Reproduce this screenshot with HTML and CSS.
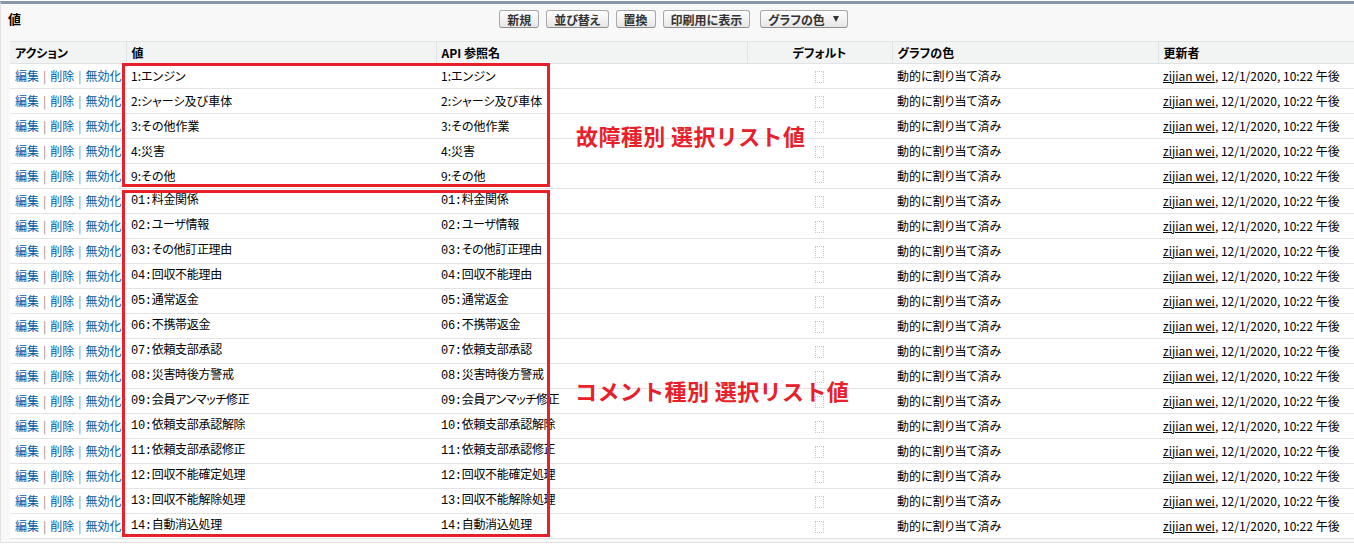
FILE: index.html
```html
<!DOCTYPE html>
<html lang="ja">
<head>
<meta charset="utf-8">
<title>値</title>
<link rel="stylesheet" href="styles.css">
</head>
<body>
<div class="panel">
  <div class="panel-head">
    <h2 class="title">値</h2>
    <div class="buttons">
      <button class="btn">新規</button>
      <button class="btn">並び替え</button>
      <button class="btn">置換</button>
      <button class="btn">印刷用に表示</button>
      <button class="btn btn-menu">グラフの色 <span class="caret"></span></button>
    </div>
    <div></div>
  </div>
  <div class="table-wrap">
    <table class="list">
      <colgroup>
        <col class="c-act"><col class="c-val"><col class="c-api"><col class="c-def"><col class="c-color"><col>
      </colgroup>
      <thead>
        <tr><th>アクション</th><th>値</th><th>API 参照名</th><th class="center">デフォルト</th><th>グラフの色</th><th>更新者</th></tr>
      </thead>
      <tbody>
        <tr><td class="act"><a>編集</a><span class="sep">|</span><a>削除</a><span class="sep">|</span><a>無効化</a></td><td>1:エンジン</td><td>1:エンジン</td><td class="center"><span class="cb"></span></td><td>動的に割り当て済み</td><td><u>zijian wei</u>, 12/1/2020, 10:22 午後</td></tr>
        <tr><td class="act"><a>編集</a><span class="sep">|</span><a>削除</a><span class="sep">|</span><a>無効化</a></td><td>2:シャーシ及び車体</td><td>2:シャーシ及び車体</td><td class="center"><span class="cb"></span></td><td>動的に割り当て済み</td><td><u>zijian wei</u>, 12/1/2020, 10:22 午後</td></tr>
        <tr><td class="act"><a>編集</a><span class="sep">|</span><a>削除</a><span class="sep">|</span><a>無効化</a></td><td>3:その他作業</td><td>3:その他作業</td><td class="center"><span class="cb"></span></td><td>動的に割り当て済み</td><td><u>zijian wei</u>, 12/1/2020, 10:22 午後</td></tr>
        <tr><td class="act"><a>編集</a><span class="sep">|</span><a>削除</a><span class="sep">|</span><a>無効化</a></td><td>4:災害</td><td>4:災害</td><td class="center"><span class="cb"></span></td><td>動的に割り当て済み</td><td><u>zijian wei</u>, 12/1/2020, 10:22 午後</td></tr>
        <tr><td class="act"><a>編集</a><span class="sep">|</span><a>削除</a><span class="sep">|</span><a>無効化</a></td><td>9:その他</td><td>9:その他</td><td class="center"><span class="cb"></span></td><td>動的に割り当て済み</td><td><u>zijian wei</u>, 12/1/2020, 10:22 午後</td></tr>
        <tr><td class="act"><a>編集</a><span class="sep">|</span><a>削除</a><span class="sep">|</span><a>無効化</a></td><td class="mono">01:料金関係</td><td class="mono">01:料金関係</td><td class="center"><span class="cb"></span></td><td>動的に割り当て済み</td><td><u>zijian wei</u>, 12/1/2020, 10:22 午後</td></tr>
        <tr><td class="act"><a>編集</a><span class="sep">|</span><a>削除</a><span class="sep">|</span><a>無効化</a></td><td class="mono">02:ユーザ情報</td><td class="mono">02:ユーザ情報</td><td class="center"><span class="cb"></span></td><td>動的に割り当て済み</td><td><u>zijian wei</u>, 12/1/2020, 10:22 午後</td></tr>
        <tr><td class="act"><a>編集</a><span class="sep">|</span><a>削除</a><span class="sep">|</span><a>無効化</a></td><td class="mono">03:その他訂正理由</td><td class="mono">03:その他訂正理由</td><td class="center"><span class="cb"></span></td><td>動的に割り当て済み</td><td><u>zijian wei</u>, 12/1/2020, 10:22 午後</td></tr>
        <tr><td class="act"><a>編集</a><span class="sep">|</span><a>削除</a><span class="sep">|</span><a>無効化</a></td><td class="mono">04:回収不能理由</td><td class="mono">04:回収不能理由</td><td class="center"><span class="cb"></span></td><td>動的に割り当て済み</td><td><u>zijian wei</u>, 12/1/2020, 10:22 午後</td></tr>
        <tr><td class="act"><a>編集</a><span class="sep">|</span><a>削除</a><span class="sep">|</span><a>無効化</a></td><td class="mono">05:通常返金</td><td class="mono">05:通常返金</td><td class="center"><span class="cb"></span></td><td>動的に割り当て済み</td><td><u>zijian wei</u>, 12/1/2020, 10:22 午後</td></tr>
        <tr><td class="act"><a>編集</a><span class="sep">|</span><a>削除</a><span class="sep">|</span><a>無効化</a></td><td class="mono">06:不携帯返金</td><td class="mono">06:不携帯返金</td><td class="center"><span class="cb"></span></td><td>動的に割り当て済み</td><td><u>zijian wei</u>, 12/1/2020, 10:22 午後</td></tr>
        <tr><td class="act"><a>編集</a><span class="sep">|</span><a>削除</a><span class="sep">|</span><a>無効化</a></td><td class="mono">07:依頼支部承認</td><td class="mono">07:依頼支部承認</td><td class="center"><span class="cb"></span></td><td>動的に割り当て済み</td><td><u>zijian wei</u>, 12/1/2020, 10:22 午後</td></tr>
        <tr><td class="act"><a>編集</a><span class="sep">|</span><a>削除</a><span class="sep">|</span><a>無効化</a></td><td class="mono">08:災害時後方警戒</td><td class="mono">08:災害時後方警戒</td><td class="center"><span class="cb"></span></td><td>動的に割り当て済み</td><td><u>zijian wei</u>, 12/1/2020, 10:22 午後</td></tr>
        <tr><td class="act"><a>編集</a><span class="sep">|</span><a>削除</a><span class="sep">|</span><a>無効化</a></td><td class="mono">09:会員アンマッチ修正</td><td class="mono">09:会員アンマッチ修正</td><td class="center"><span class="cb"></span></td><td>動的に割り当て済み</td><td><u>zijian wei</u>, 12/1/2020, 10:22 午後</td></tr>
        <tr><td class="act"><a>編集</a><span class="sep">|</span><a>削除</a><span class="sep">|</span><a>無効化</a></td><td class="mono">10:依頼支部承認解除</td><td class="mono">10:依頼支部承認解除</td><td class="center"><span class="cb"></span></td><td>動的に割り当て済み</td><td><u>zijian wei</u>, 12/1/2020, 10:22 午後</td></tr>
        <tr><td class="act"><a>編集</a><span class="sep">|</span><a>削除</a><span class="sep">|</span><a>無効化</a></td><td class="mono">11:依頼支部承認修正</td><td class="mono">11:依頼支部承認修正</td><td class="center"><span class="cb"></span></td><td>動的に割り当て済み</td><td><u>zijian wei</u>, 12/1/2020, 10:22 午後</td></tr>
        <tr><td class="act"><a>編集</a><span class="sep">|</span><a>削除</a><span class="sep">|</span><a>無効化</a></td><td class="mono">12:回収不能確定処理</td><td class="mono">12:回収不能確定処理</td><td class="center"><span class="cb"></span></td><td>動的に割り当て済み</td><td><u>zijian wei</u>, 12/1/2020, 10:22 午後</td></tr>
        <tr><td class="act"><a>編集</a><span class="sep">|</span><a>削除</a><span class="sep">|</span><a>無効化</a></td><td class="mono">13:回収不能解除処理</td><td class="mono">13:回収不能解除処理</td><td class="center"><span class="cb"></span></td><td>動的に割り当て済み</td><td><u>zijian wei</u>, 12/1/2020, 10:22 午後</td></tr>
        <tr><td class="act"><a>編集</a><span class="sep">|</span><a>削除</a><span class="sep">|</span><a>無効化</a></td><td class="mono">14:自動消込処理</td><td class="mono">14:自動消込処理</td><td class="center"><span class="cb"></span></td><td>動的に割り当て済み</td><td><u>zijian wei</u>, 12/1/2020, 10:22 午後</td></tr>
      </tbody>
    </table>
    <div class="mark mark-1"></div>
    <div class="mark mark-2"></div>
    <div class="note note-1">故障種別 選択リスト値</div>
    <div class="note note-2">コメント種別 選択リスト値</div>
  </div>
</div>
</body>
</html>
```

FILE: styles.css
```css
html, body {
  margin: 0;
  padding: 0;
  background: #ffffff;
}

body {
  padding-top: 1px;
  font-family: "Noto Sans CJK JP", "Liberation Sans", sans-serif;
  font-size: 12px;
  color: #000;
  overflow: hidden;
}

.panel {
  border-top: 3px solid #8995a8;
  border-left: 1px solid #e2e2e2;
  border-bottom: 1px solid #e2e2e2;
  background: #f8f8f8;
  padding-bottom: 3px;
}

.panel-head {
  display: grid;
  grid-template-columns: 1fr auto 1fr;
  align-items: start;
  height: 37px;
  box-sizing: border-box;
  padding-top: 6px;
}

.title {
  margin: 0;
  padding: 1px 0 0 7px;
  font-size: 13px;
  font-weight: bold;
  line-height: 16px;
}

.buttons {
  display: flex;
  gap: 7px;
  margin-right: 8px;
}

.btn {
  height: 18px;
  padding: 0 7px;
  border: 1px solid #a9a9a9;
  border-bottom-color: #8f8f8f;
  border-radius: 3px;
  background: linear-gradient(#ffffff, #e6e6e6);
  font-family: "Noto Sans CJK JP", sans-serif;
  font-size: 12px;
  font-weight: bold;
  line-height: 15px;
  color: #333;
  font-feature-settings: "palt";
  display: flex;
  align-items: center;
}

.btn-menu {
  margin-left: 3px;
  gap: 8px;
  padding-right: 8px;
}

.caret {
  display: inline-block;
  width: 0;
  height: 0;
  border-left: 3.5px solid transparent;
  border-right: 3.5px solid transparent;
  border-top: 6px solid #333;
}

.table-wrap {
  position: relative;
  margin-left: 9px;
}

.list {
  width: 100%;
  border-collapse: collapse;
  table-layout: fixed;
  background: #fff;
}

.c-act { width: 116px; }
.c-val { width: 310px; }
.c-api { width: 311px; }
.c-def { width: 145px; }
.c-color { width: 266px; }

.list th {
  height: 21px;
  padding: 0 5px;
  background: #f2f3f3;
  border-top: 1px solid #e0e3e5;
  border-bottom: 1px solid #e0e3e5;
  border-right: 1px solid #e0e3e5;
  text-align: left;
  font-weight: bold;
  font-size: 12px;
  font-feature-settings: "palt";
  white-space: nowrap;
  line-height: 14px;
}

.list th:last-child {
  border-right: none;
}

.list td {
  height: 24px;
  padding: 0 5px;
  border-bottom: 1px solid #e3e3e3;
  white-space: nowrap;
  line-height: 14px;
  font-feature-settings: "palt";
  overflow: visible;
}

.list .center {
  text-align: center;
}

.act a {
  color: #015ba7;
  text-decoration: none;
}

.sep {
  color: #8a8a8a;
  margin: 0 4px;
}

.mono {
  font-family: "Liberation Mono", "Noto Sans CJK JP", monospace;
  font-feature-settings: normal;
  letter-spacing: -0.3px;
}

.cb {
  display: inline-block;
  width: 7px;
  height: 10px;
  border: 1px dotted #c9c9c9;
  vertical-align: middle;
}

u {
  text-decoration: underline;
}

.mark {
  position: absolute;
  left: 112px;
  width: 428px;
  border: 3px solid #e8202a;
  box-sizing: border-box;
  pointer-events: none;
}

.mark-1 {
  top: 22px;
  height: 124px;
}

.mark-2 {
  top: 149px;
  height: 347px;
}

.note {
  position: absolute;
  color: #e8202a;
  font-size: 22px;
  font-weight: bold;
  line-height: 26px;
  white-space: nowrap;
  letter-spacing: 0.4px;
}

.note-1 {
  left: 566px;
  top: 81px;
}

.note-2 {
  left: 565px;
  top: 336px;
}
```
